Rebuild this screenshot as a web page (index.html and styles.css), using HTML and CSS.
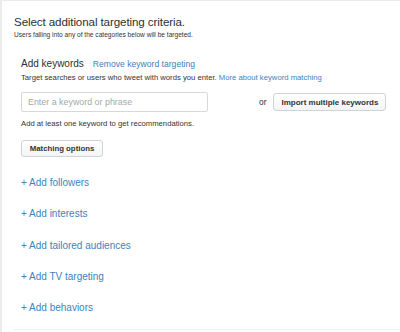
FILE: index.html
```html
<!DOCTYPE html>
<html>
<head>
<meta charset="utf-8">
<link rel="stylesheet" href="styles.css">
</head>
<body>
<div class="frame">
  <div class="panel">
    <h1 class="title">Select additional targeting criteria.</h1>
    <p class="subtitle">Users falling into any of the categories below will be targeted.</p>

    <section class="keywords">
      <div class="kw-head">
        <h2 class="kw-title">Add keywords</h2>
        <a class="link small-link">Remove keyword targeting</a>
      </div>
      <p class="hint">Target searches or users who tweet with words you enter. <a class="link">More about keyword matching</a></p>
      <div class="kw-row">
        <input class="kw-input" type="text" placeholder="Enter a keyword or phrase">
        <span class="or">or</span>
        <button class="btn">Import multiple keywords</button>
      </div>
      <p class="hint">Add at least one keyword to get recommendations.</p>
      <button class="btn btn-match">Matching options</button>
    </section>

    <ul class="adds">
      <li><a class="link">+ Add followers</a></li>
      <li><a class="link">+ Add interests</a></li>
      <li><a class="link">+ Add tailored audiences</a></li>
      <li><a class="link">+ Add TV targeting</a></li>
      <li><a class="link">+ Add behaviors</a></li>
    </ul>
  </div>
</div>
</body>
</html>
```
FILE: styles.css
```css
* { box-sizing: border-box; }
html, body { margin: 0; padding: 0; background: #fff; }
body {
  font-family: "Liberation Sans", Arial, sans-serif;
  color: #292f33;
  width: 400px;
  height: 332px;
  overflow: hidden;
}
.frame {
  height: 332px;
  border-left: 2px solid #ebebeb;
  border-top: 1px solid #ebebeb;
}
.panel {
  padding-top: 13px;
  height: 329px;
  border-bottom: 1px solid #eeeeee;
  margin-left: 12px;
}
.title {
  margin: 0;
  font-size: 11.6px;
  font-weight: normal;
  line-height: 16px;
  letter-spacing: -0.1px;
}
.subtitle {
  margin: 1px 0 0;
  font-size: 6.6px;
  line-height: 8px;
  color: #333;
}
.keywords {
  margin-top: 18px;
  padding-left: 7px;
}
.kw-head {
  display: flex;
  align-items: baseline;
  gap: 9px;
}
.kw-title {
  margin: 0;
  font-size: 10px;
  font-weight: normal;
  line-height: 14px;
}
.link { color: #3b83c0; text-decoration: none; }
.small-link { font-size: 8.6px; }
.hint {
  margin: 2px 0 0;
  font-size: 7.7px;
  line-height: 9px;
  color: #333;
}
.kw-row {
  display: flex;
  align-items: center;
  margin-top: 10px;
  margin-bottom: 7px;
}
.kw-input {
  width: 187px;
  height: 20px;
  border: 1px solid #d6d9db;
  border-radius: 2px;
  padding: 0 6px;
  font-family: "Liberation Sans", Arial, sans-serif;
  font-size: 8.9px;
  color: #292f33;
}
.kw-input::placeholder { color: #a3a9ad; font-size: 8.9px; }
.or {
  margin-left: 51px;
  font-size: 8.4px;
  color: #333;
}
.btn {
  font-family: inherit;
  font-size: 8px;
  font-weight: bold;
  color: #333;
  background: linear-gradient(#fff, #f3f4f5);
  border: 1px solid #cfd3d6;
  border-radius: 3px;
  height: 18px;
  padding: 0 7px;
  margin-left: 7px;
}
.btn-match {
  display: block;
  margin: 12px 0 0;
  height: 17px;
  width: 82px;
  padding: 0;
  font-size: 7.8px;
}
.adds {
  list-style: none;
  margin: 19px 0 0;
  padding: 0 0 0 7px;
  display: flex;
  flex-direction: column;
  gap: 17.3px;
}
.adds li { font-size: 10px; line-height: 14px; }
```
